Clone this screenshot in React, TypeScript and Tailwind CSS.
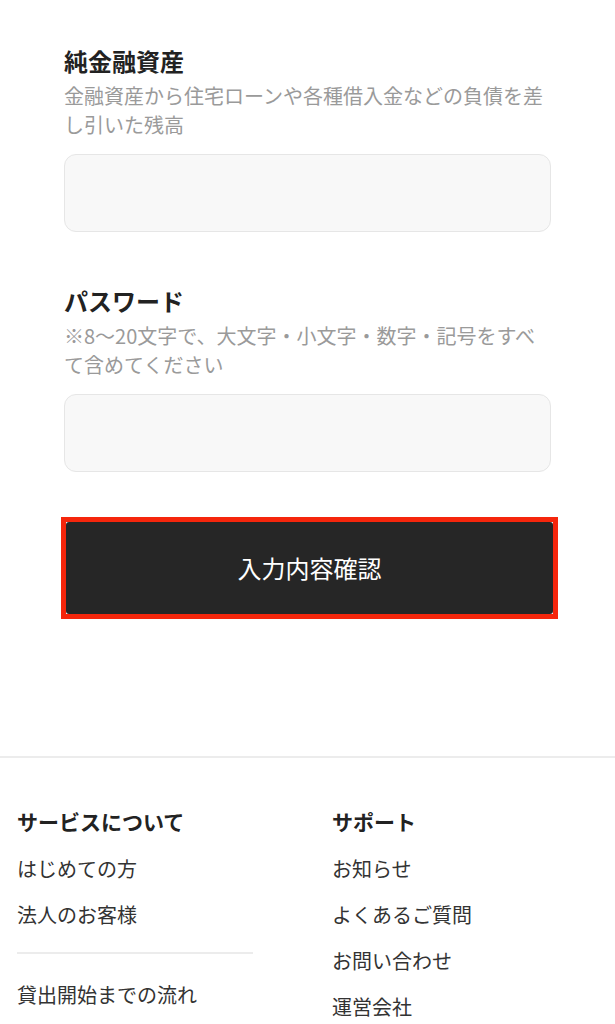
const font = { fontFamily: '"Noto Sans CJK JP", "Noto Sans", sans-serif' }

function Field({ label, hint }: { label: string; hint: string }) {
  return (
    <div>
      <h2 className="text-[24px] leading-[36px] font-bold text-[#222]">{label}</h2>
      <p className="mt-[2px] text-[20px] leading-[29px] text-[#9a9a9a]">{hint}</p>
      <input
        type="text"
        className="mt-[15px] block h-[78px] w-full rounded-[12px] border border-[#e6e6e6] bg-[#f8f8f8] px-4 text-[20px] outline-none"
      />
    </div>
  )
}

export default function App() {
  const service = ['はじめての方', '法人のお客様']
  const support = ['お知らせ', 'よくあるご質問', 'お問い合わせ', '運営会社']

  return (
    <div className="min-h-screen w-[615px] overflow-hidden bg-white" style={font}>
      <div className="px-[64px] pt-[43px]">
        <Field label="純金融資産" hint="金融資産から住宅ローンや各種借入金などの負債を差し引いた残高" />
        <div className="mt-[51px]">
          <Field label="パスワード" hint="※8〜20文字で、大文字・小文字・数字・記号をすべて含めてください" />
        </div>
        {/* red highlight frame around the submit button */}
        <div className="mt-[45px] -ml-[3px] -mr-[7px] border-[5px] border-[#f5260c]">
          <button className="flex h-[92px] w-full items-center justify-center rounded-[3px] bg-[#262626] text-[24px] text-white">
            入力内容確認
          </button>
        </div>
      </div>

      <div className="mt-[137px] border-t-2 border-[#ececec]" />

      <div className="flex px-[17px] pt-[48px]">
        <div className="w-[315px]">
          <h3 className="text-[21px] leading-[30px] font-bold text-[#222]">サービスについて</h3>
          <ul className="mt-[18px] flex flex-col gap-[16px]">
            {service.map((s) => (
              <li key={s} className="text-[20px] leading-[30px] text-[#333]">{s}</li>
            ))}
          </ul>
          <div className="mt-[22px] h-[2px] w-[236px] bg-[#ececec]" />
          <p className="mt-[26px] text-[20px] leading-[30px] text-[#333]">貸出開始までの流れ</p>
        </div>
        <div>
          <h3 className="text-[21px] leading-[30px] font-bold text-[#222]">サポート</h3>
          <ul className="mt-[18px] flex flex-col gap-[16px]">
            {support.map((s) => (
              <li key={s} className="text-[20px] leading-[30px] text-[#333]">{s}</li>
            ))}
          </ul>
        </div>
      </div>

      <div className="mx-[45px] mt-[2px] h-[10px] rounded-t-[8px] bg-[#f6f6f6]" />
    </div>
  )
}
